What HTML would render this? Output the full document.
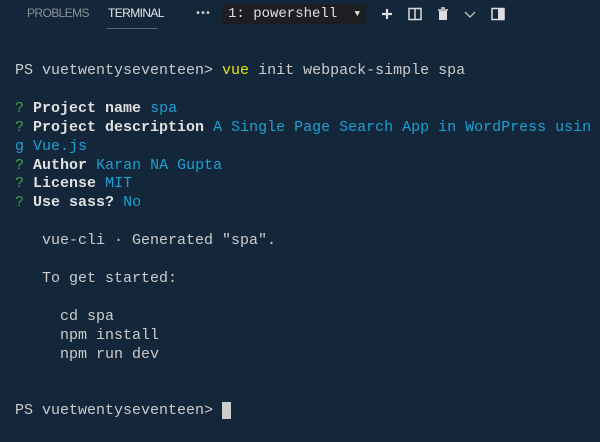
<!DOCTYPE html>
<html><head><meta charset="utf-8"><style>
html,body{margin:0;padding:0;}
body{width:600px;height:442px;background:#13263a;overflow:hidden;position:relative;font-family:"Liberation Mono",monospace;}
.tab{position:absolute;top:6px;font-family:"Liberation Sans",sans-serif;font-size:12px;letter-spacing:-0.6px;}
#term{position:absolute;left:15px;top:62px;font-size:15px;line-height:18.9px;color:#cccccc;white-space:pre;letter-spacing:0;}
.g{color:#3fa33f}.b{font-weight:bold;color:#e0e0e0}.c{color:#1ea0d0}.y{color:#e5e510}
.ic{position:absolute;top:6px;}
</style></head><body>
<div class="tab" style="left:27px;color:#8a929a">PROBLEMS</div>
<div class="tab" style="left:108px;color:#e7e7e7">TERMINAL</div>
<div style="position:absolute;left:107px;top:28px;width:51px;height:1px;background:#5a6470"></div>
<div style="position:absolute;left:195px;top:9px;color:#ccc;font-size:10px;font-weight:bold;letter-spacing:-1px">•••</div>
<div style="position:absolute;left:222px;top:4px;width:144px;height:20px;background:#1c1e22;color:#e0e0e0;font-size:14px;line-height:20px;"><span style="padding-left:6px">1: powershell</span><span style="position:absolute;right:6px;font-size:9px">▼</span></div>
<svg class="ic" style="left:380px" width="14" height="16" viewBox="0 0 14 16"><path d="M7 3v10M2 8h10" stroke="#ddd" stroke-width="2.2"/></svg>
<svg class="ic" style="left:408px" width="14" height="16" viewBox="0 0 14 16"><rect x="1" y="2.5" width="12" height="11" fill="none" stroke="#ddd" stroke-width="1.5"/><path d="M7 3v10" stroke="#ddd" stroke-width="1.5"/></svg>
<svg class="ic" style="left:436px" width="14" height="16" viewBox="0 0 14 16"><path d="M2 4h10M5 2h4" stroke="#ddd" stroke-width="1.5"/><rect x="3" y="5" width="8" height="9" fill="#ddd"/></svg>
<svg class="ic" style="left:463px" width="14" height="16" viewBox="0 0 14 16"><path d="M2 6l5 5 5-5" fill="none" stroke="#bbb" stroke-width="1.4"/></svg>
<svg class="ic" style="left:491px" width="14" height="16" viewBox="0 0 14 16"><rect x="1" y="2.5" width="12" height="11" fill="none" stroke="#ddd" stroke-width="1.5"/><rect x="7" y="3" width="6" height="10" fill="#ddd"/></svg>
<div id="term">PS vuetwentyseventeen&gt; <span class="y">vue</span> init webpack-simple spa

<span class="g">?</span> <span class="b">Project name</span> <span class="c">spa</span>
<span class="g">?</span> <span class="b">Project description</span> <span class="c">A Single Page Search App in WordPress usin</span>
<span class="c">g Vue.js</span>
<span class="g">?</span> <span class="b">Author</span> <span class="c">Karan NA Gupta</span>
<span class="g">?</span> <span class="b">License</span> <span class="c">MIT</span>
<span class="g">?</span> <span class="b">Use sass?</span> <span class="c">No</span>

   vue-cli · Generated "spa".

   To get started:

     cd spa
     npm install
     npm run dev


PS vuetwentyseventeen&gt; <span style="background:#cccccc">&nbsp;</span></div>
</body></html>
